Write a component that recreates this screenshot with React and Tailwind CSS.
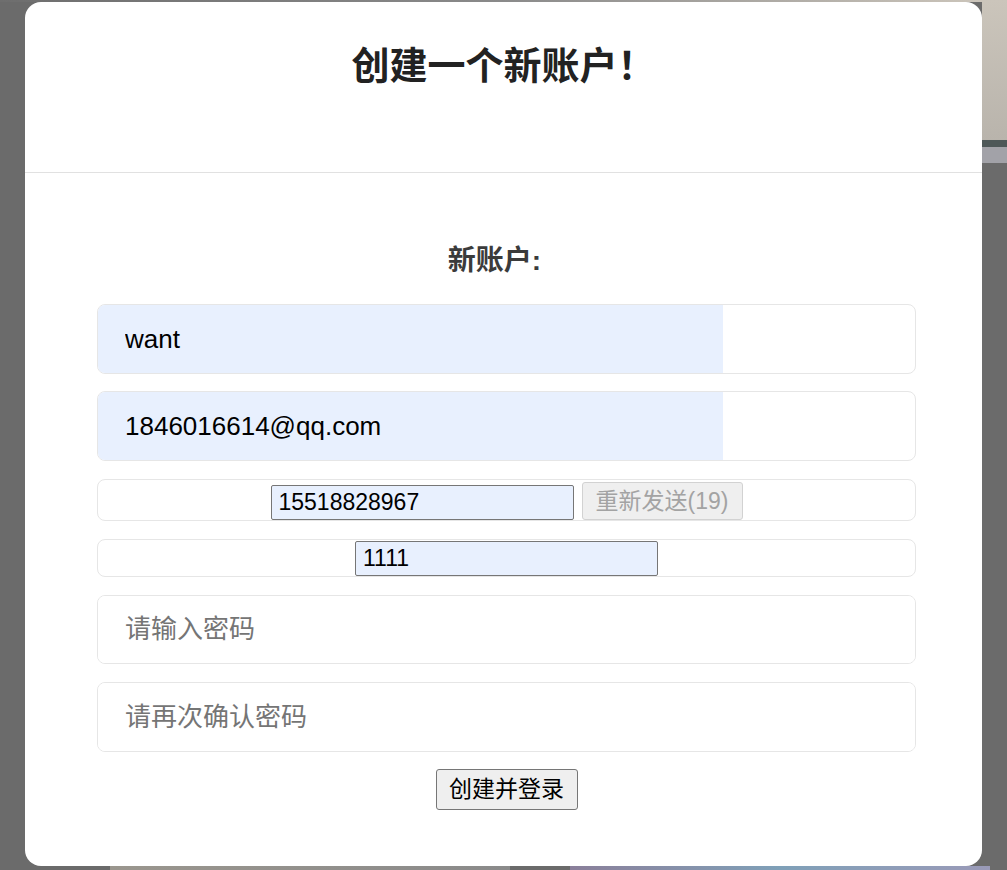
import React, { useState } from 'react';

const font = { fontFamily: '"Liberation Sans", "Noto Sans CJK SC", sans-serif' };

const FieldBox = ({ children, className = '' }) => (
  <div className={`w-[819px] border border-[#e6e6e6] rounded-[8px] overflow-hidden ${className}`}>
    {children}
  </div>
);

const App = () => {
  const [username, setUsername] = useState('want');
  const [email, setEmail] = useState('1846016614@qq.com');
  const [phone, setPhone] = useState('15518828967');
  const [code, setCode] = useState('1111');
  const [password, setPassword] = useState('');
  const [confirm, setConfirm] = useState('');

  return (
    <div
      className="relative w-full h-[870px] overflow-hidden bg-[#6b6b6b] pt-[2px] pl-[25px]"
      style={font}
    >
      {/* dimmed desktop behind the dialog */}
      <div className="absolute left-0 top-0 w-full h-[2px] bg-gradient-to-r from-[#6e6e6e] via-[#8a8a8a] to-[#cfc8bd]" />
      <div className="absolute right-0 top-0 w-[25px] h-[140px] bg-gradient-to-b from-[#cbc5bb] to-[#b9b4ac]" />
      <div className="absolute right-0 top-[140px] w-[25px] h-[7px] bg-[#4e5858]" />
      <div className="absolute right-0 top-[147px] w-[25px] h-[16px] bg-[#a2a2a8]" />
      <div className="absolute left-[110px] bottom-0 w-[400px] h-[4px] bg-gradient-to-r from-[#9a968e] to-[#8a8a8a]" />
      <div className="absolute left-[570px] bottom-0 w-[420px] h-[4px] bg-gradient-to-r from-[#8a7f9a] via-[#7fa0b8] to-[#9a9ab8]" />

      <div className="relative w-[957px] h-[864px] bg-white rounded-[16px] flex flex-col">
        <div className="h-[171px] border-b border-[#e1e1e1] pt-[41px]">
          <h1 className="text-center text-[38px] leading-[46px] font-bold text-[#222222]">
            创建一个新账户！
          </h1>
        </div>

        <form
          className="ml-[72px] w-[819px] flex flex-col items-center"
          onSubmit={(e) => e.preventDefault()}
        >
          <h2 className="w-full pr-[24px] mt-[72px] mb-[27px] text-center text-[28px] leading-[32px] font-bold text-[#3b3b3b]">
            新账户:
          </h2>

          <FieldBox className="h-[70px]">
            <input
              type="text"
              value={username}
              onChange={(e) => setUsername(e.target.value)}
              className="w-[625px] h-full bg-[#e8f0fe] pl-[27px] text-[26px] text-black outline-none"
            />
          </FieldBox>

          <FieldBox className="h-[70px] mt-[17px]">
            <input
              type="email"
              value={email}
              onChange={(e) => setEmail(e.target.value)}
              className="w-[625px] h-full bg-[#e8f0fe] pl-[27px] text-[26px] text-black outline-none"
            />
          </FieldBox>

          <FieldBox className="h-[42px] mt-[18px] flex items-end justify-center gap-[8px] overflow-visible">
            <input
              type="text"
              value={phone}
              onChange={(e) => setPhone(e.target.value)}
              className="w-[303px] h-[35px] bg-[#e8f0fe] border border-[#767676] rounded-[2px] px-[7px] text-[23px] text-black outline-none"
            />
            <button
              type="button"
              disabled
              className="w-[161px] h-[38px] bg-[#efefef] border border-[#d2d2d2] rounded-[3px] text-[23px] text-[#a3a3a3]"
            >
              重新发送(19)
            </button>
          </FieldBox>

          <FieldBox className="h-[38px] mt-[18px] flex items-end justify-center overflow-visible">
            <input
              type="text"
              value={code}
              onChange={(e) => setCode(e.target.value)}
              className="w-[303px] h-[35px] bg-[#e8f0fe] border border-[#767676] rounded-[2px] px-[7px] text-[23px] text-black outline-none"
            />
          </FieldBox>

          <FieldBox className="h-[69px] mt-[18px]">
            <input
              type="password"
              placeholder="请输入密码"
              value={password}
              onChange={(e) => setPassword(e.target.value)}
              className="w-full h-full bg-white pl-[27px] text-[26px] text-black placeholder:text-[#757575] outline-none"
            />
          </FieldBox>

          <FieldBox className="h-[70px] mt-[18px]">
            <input
              type="password"
              placeholder="请再次确认密码"
              value={confirm}
              onChange={(e) => setConfirm(e.target.value)}
              className="w-full h-full bg-white pl-[27px] text-[26px] text-black placeholder:text-[#757575] outline-none"
            />
          </FieldBox>

          <button
            type="submit"
            className="mt-[17px] w-[142px] h-[41px] bg-[#efefef] border border-[#767676] rounded-[3px] text-[23px] text-black"
          >
            创建并登录
          </button>
        </form>
      </div>
    </div>
  );
};

export default App;
